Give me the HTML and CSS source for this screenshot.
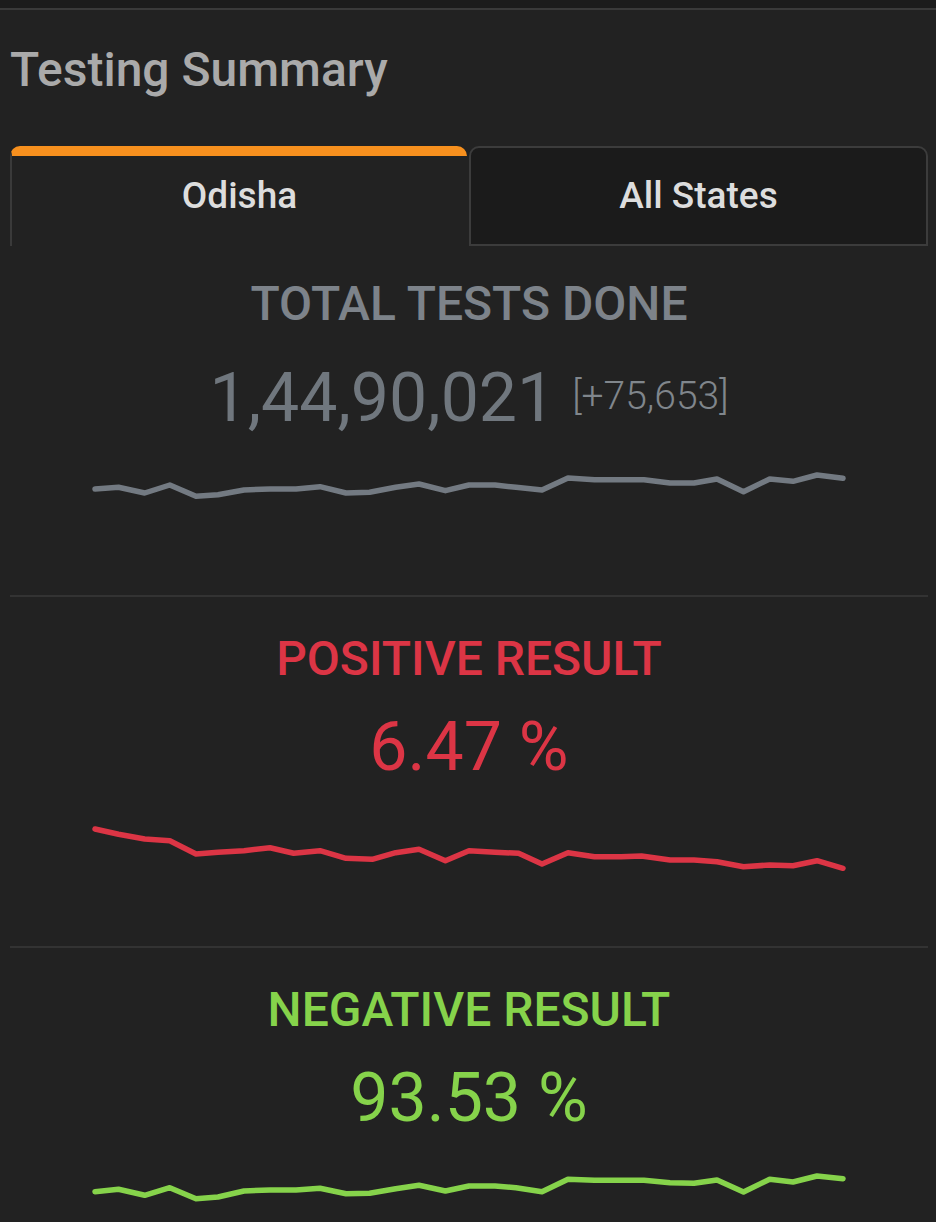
FILE: index.html
```html
<!DOCTYPE html>
<html lang="en">
<head>
    <meta charset="UTF-8">
    <meta name="viewport" content="width=device-width, initial-scale=1.0">
    <title>Testing Summary</title>
    <link rel="stylesheet" href="styles.css">
</head>
<body>
    <div class="topbar"></div>

    <div class="summary">
        <h2 class="summary-title">Testing Summary</h2>

        <div class="tabs">
            <div class="tab active">Odisha</div>
            <div class="tab">All States</div>
        </div>

        <!-- 总检测数 -->
        <div class="stat stat-tests">
            <div class="stat-label">TOTAL TESTS DONE</div>
            <div class="stat-value">1,44,90,021 <span class="stat-delta">[+75,653]</span></div>
            <svg class="spark" viewBox="0 0 760 60" width="760" height="60">
                <polyline points="6,30 29.5,28.3 55.7,34 80.8,26 107,37.3 129,35.7 155,31 181,30 207,30 231,27.7 257,34 280.6,33.3 306.7,28.3 330,25 356.4,31.7 380,26 406,26 427,28.3 453,31 479,19 505.5,20.7 532,20.7 555,20.7 581,24 605,24 628,20 654.5,32.7 680.7,20 704,22.3 728,16 754,19.3"/>
            </svg>
        </div>

        <!-- 阳性 -->
        <div class="stat stat-positive">
            <div class="stat-label">POSITIVE RESULT</div>
            <div class="stat-value">6.47 %</div>
            <svg class="spark" viewBox="0 0 760 60" width="760" height="60">
                <polyline points="6,14 29.5,19.3 55.7,24 80.8,25.7 107,39 129,37.3 155,35.7 181,32.7 204.7,38.3 231,35.7 257,43.3 283.2,44.3 306.7,37.7 330,34.3 356.4,45.7 380,35.7 406,37.3 429.6,38.3 453,49 479,37.7 505.5,41.7 532,41.7 552.5,41 581,45 605,45 628,46.7 654.5,51.7 680.7,50 704,50.7 728,45.7 754,53.3"/>
            </svg>
        </div>

        <!-- 阴性 -->
        <div class="stat stat-negative">
            <div class="stat-label">NEGATIVE RESULT</div>
            <div class="stat-value">93.53 %</div>
            <svg class="spark" viewBox="0 0 760 60" width="760" height="60">
                <polyline points="6,25.7 29.5,23.3 55.7,29.3 80.8,21.7 107,32.7 129,31 155,25 181,24 207,24 231,22.3 257,27.7 280.6,27.3 306.7,22.7 330,19.3 356.4,25 380,20 406,20 427,21.7 453,25.7 479,13.3 505.5,14.3 532,14.3 555,14.3 581,16.7 605,17.3 628,14 654.5,26 680.7,13.3 704,16 728,10 754,12.7"/>
            </svg>
        </div>
    </div>
</body>
</html>
```

FILE: styles.css
```css
body {
    margin: 0;
    background-color: #222;
    font-family: Roboto, "Liberation Sans", sans-serif;
}

.topbar {
    height: 8px;
    background-color: #1c1c1c;
    border-bottom: 2px solid #3a3a3a;
}

.summary {
    padding: 0 8px 0 10px;
}

.summary-title {
    margin: 30px 0 0;
    font-size: 48px;
    line-height: 60px;
    font-weight: 500;
    color: #aaa;
}

.tabs {
    display: flex;
    gap: 2px;
    margin-top: 46px;
}

.tab {
    flex: 1;
    box-sizing: border-box;
    height: 100px;
    padding-top: 28px;
    text-align: center;
    font-size: 37px;
    line-height: 40px;
    font-weight: 500;
    color: #ddd;
    background-color: #1b1b1b;
    border: 2px solid #3c3c3c;
    border-radius: 10px 10px 0 0;
}

.tab.active {
    padding-top: 20px;
    background-color: #222;
    border: 0;
    border-top: 10px solid #f7901e;
    border-left: 2px solid #3a3a3a;
}

.stat {
    box-sizing: border-box;
    height: 351px;
    padding-top: 32px;
    border-bottom: 2px solid #333;
    text-align: center;
}

.stat-tests {
    padding-top: 28px;
}

.stat-label {
    font-size: 48px;
    line-height: 60px;
    font-weight: 500;
}

.stat-value {
    margin-top: 18px;
    font-size: 68px;
    line-height: 80px;
}

.stat-tests .stat-value {
    margin-top: 22px;
}

.stat-delta {
    font-size: 39px;
    font-weight: 300;
    vertical-align: 12px;
    color: #80868c;
}

.spark {
    display: block;
    margin: 28px auto 0;
}

.stat-tests .spark {
    margin-top: 21px;
}

.spark polyline {
    fill: none;
    stroke-width: 5.5;
    stroke-linejoin: round;
    stroke-linecap: round;
}

.stat-tests .stat-label { color: #7d838a; }
.stat-tests .stat-value { color: #70777e; }
.stat-tests .spark polyline { stroke: #737a82; }

.stat-positive .stat-label,
.stat-positive .stat-value { color: #dc3545; }
.stat-positive .spark polyline { stroke: #dc3545; }

.stat-negative .stat-label,
.stat-negative .stat-value { color: #86d34b; }
.stat-negative .spark polyline { stroke: #86d34b; }
.stat-negative { border-bottom: 0; }
```
